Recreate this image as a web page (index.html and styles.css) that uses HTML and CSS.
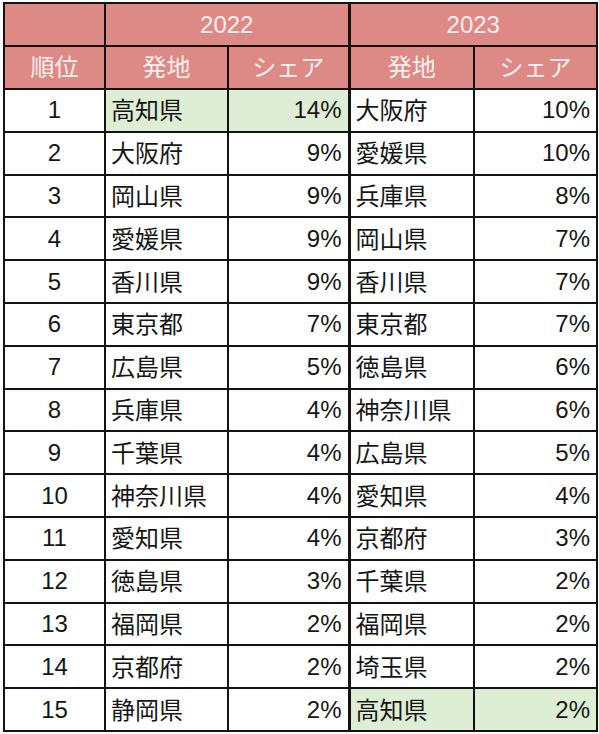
FILE: index.html
```html
<!DOCTYPE html>
<html lang="ja">
<head>
<meta charset="utf-8">
<title>発地ランキング</title>
<link rel="stylesheet" href="styles.css">
</head>
<body>
<table class="rank">
  <colgroup>
    <col class="c-rank"><col class="c-pref"><col class="c-share"><col class="c-pref2"><col class="c-share2">
  </colgroup>
  <thead>
    <tr class="h1">
      <th></th>
      <th colspan="2" class="year sep">2022</th>
      <th colspan="2" class="year">2023</th>
    </tr>
    <tr class="h2">
      <th>順位</th>
      <th>発地</th>
      <th class="sep">シェア</th>
      <th>発地</th>
      <th>シェア</th>
    </tr>
  </thead>
  <tbody>
    <tr><td class="n">1</td><td class="p hl">高知県</td><td class="s sep hl">14%</td><td class="p">大阪府</td><td class="s">10%</td></tr>
    <tr><td class="n">2</td><td class="p">大阪府</td><td class="s sep">9%</td><td class="p">愛媛県</td><td class="s">10%</td></tr>
    <tr><td class="n">3</td><td class="p">岡山県</td><td class="s sep">9%</td><td class="p">兵庫県</td><td class="s">8%</td></tr>
    <tr><td class="n">4</td><td class="p">愛媛県</td><td class="s sep">9%</td><td class="p">岡山県</td><td class="s">7%</td></tr>
    <tr><td class="n">5</td><td class="p">香川県</td><td class="s sep">9%</td><td class="p">香川県</td><td class="s">7%</td></tr>
    <tr><td class="n">6</td><td class="p">東京都</td><td class="s sep">7%</td><td class="p">東京都</td><td class="s">7%</td></tr>
    <tr><td class="n">7</td><td class="p">広島県</td><td class="s sep">5%</td><td class="p">徳島県</td><td class="s">6%</td></tr>
    <tr><td class="n">8</td><td class="p">兵庫県</td><td class="s sep">4%</td><td class="p">神奈川県</td><td class="s">6%</td></tr>
    <tr><td class="n">9</td><td class="p">千葉県</td><td class="s sep">4%</td><td class="p">広島県</td><td class="s">5%</td></tr>
    <tr><td class="n">10</td><td class="p">神奈川県</td><td class="s sep">4%</td><td class="p">愛知県</td><td class="s">4%</td></tr>
    <tr><td class="n">11</td><td class="p">愛知県</td><td class="s sep">4%</td><td class="p">京都府</td><td class="s">3%</td></tr>
    <tr><td class="n">12</td><td class="p">徳島県</td><td class="s sep">3%</td><td class="p">千葉県</td><td class="s">2%</td></tr>
    <tr><td class="n">13</td><td class="p">福岡県</td><td class="s sep">2%</td><td class="p">福岡県</td><td class="s">2%</td></tr>
    <tr><td class="n">14</td><td class="p">京都府</td><td class="s sep">2%</td><td class="p">埼玉県</td><td class="s">2%</td></tr>
    <tr><td class="n">15</td><td class="p">静岡県</td><td class="s sep">2%</td><td class="p hl">高知県</td><td class="s hl">2%</td></tr>
  </tbody>
</table>
</body>
</html>
```

FILE: styles.css
```css
html, body {
  margin: 0;
  padding: 0;
  background: #ffffff;
}

body {
  padding: 2px 0 0 3px;
  font-family: "Liberation Sans", "Noto Sans CJK JP", sans-serif;
  color: #161616;
}

.rank {
  border-collapse: collapse;
  table-layout: fixed;
  width: 593px;
  font-size: 24px;
  line-height: 1;
}

.c-rank { width: 101px; }
.c-pref { width: 123px; }
.c-share { width: 121px; }
.c-pref2 { width: 125px; }
.c-share2 { width: 123px; }

.rank th,
.rank td {
  border: 2px solid #141212;
  padding: 0;
  white-space: nowrap;
}

.rank th {
  background: #dd8a86;
  color: #fdf1ef;
  font-weight: normal;
  text-align: center;
}

.rank .h1 { height: 43px; }
.rank .h2 { height: 43px; }
.rank .h2 th { padding-top: 1px; }

.rank tbody tr { height: 42.8px; }

.rank td.n {
  text-align: center;
}

.rank td.p {
  text-align: left;
  padding-left: 5px;
  padding-bottom: 2px;
  font-family: "Noto Sans CJK JP", sans-serif;
}

.rank td.s {
  text-align: right;
  padding-right: 6px;
}

.rank .sep {
  border-right-width: 3px;
}

.rank td.hl {
  background: #deeed4;
}
```
